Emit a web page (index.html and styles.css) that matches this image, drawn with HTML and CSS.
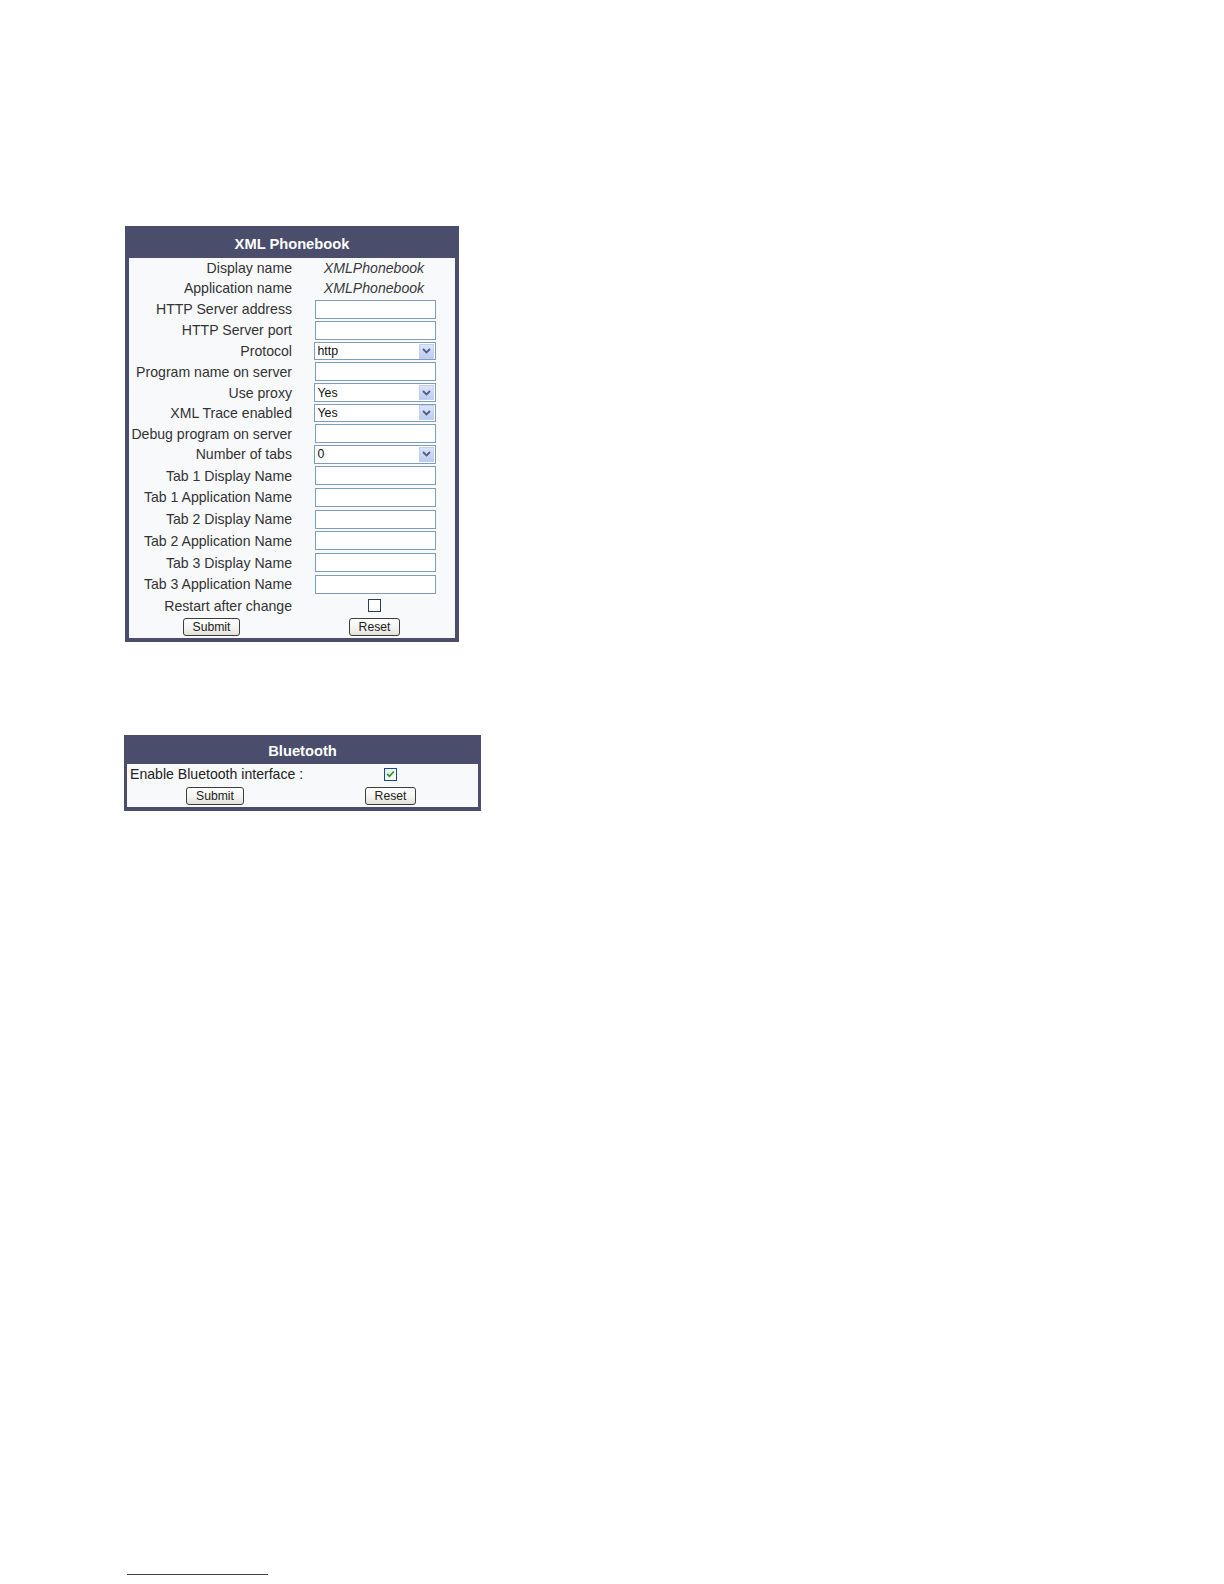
FILE: index.html
```html
<!DOCTYPE html>
<html>
<head>
<meta charset="utf-8">
<title>XML Phonebook</title>
<link rel="stylesheet" href="styles.css">
</head>
<body>
<div class="page">
  <section class="panel phonebook">
    <div class="panel-head">XML Phonebook</div>
    <div class="panel-body">
      <div class="row h20"><span class="label">Display name</span><span class="value">XMLPhonebook</span></div>
      <div class="row h20"><span class="label">Application name</span><span class="value">XMLPhonebook</span></div>
      <div class="row h21"><span class="label">HTTP Server address</span><span class="cell"><span class="field"></span></span></div>
      <div class="row h21"><span class="label">HTTP Server port</span><span class="cell"><span class="field"></span></span></div>
      <div class="row h20"><span class="label">Protocol</span><span class="cell"><span class="select"><span class="select-text">http</span><span class="select-btn"><svg width="9" height="6" viewBox="0 0 9 6"><path d="M1 1 L4.5 4.5 L8 1" fill="none" stroke="#4d6185" stroke-width="1.8"/></svg></span></span></span></div>
      <div class="row h21"><span class="label">Program name on server</span><span class="cell"><span class="field"></span></span></div>
      <div class="row h20"><span class="label">Use proxy</span><span class="cell"><span class="select"><span class="select-text">Yes</span><span class="select-btn"><svg width="9" height="6" viewBox="0 0 9 6"><path d="M1 1 L4.5 4.5 L8 1" fill="none" stroke="#4d6185" stroke-width="1.8"/></svg></span></span></span></div>
      <div class="row h20"><span class="label">XML Trace enabled</span><span class="cell"><span class="select"><span class="select-text">Yes</span><span class="select-btn"><svg width="9" height="6" viewBox="0 0 9 6"><path d="M1 1 L4.5 4.5 L8 1" fill="none" stroke="#4d6185" stroke-width="1.8"/></svg></span></span></span></div>
      <div class="row h21"><span class="label">Debug program on server</span><span class="cell"><span class="field"></span></span></div>
      <div class="row h20"><span class="label">Number of tabs</span><span class="cell"><span class="select"><span class="select-text">0</span><span class="select-btn"><svg width="9" height="6" viewBox="0 0 9 6"><path d="M1 1 L4.5 4.5 L8 1" fill="none" stroke="#4d6185" stroke-width="1.8"/></svg></span></span></span></div>
      <div class="row h22"><span class="label">Tab 1 Display Name</span><span class="cell"><span class="field"></span></span></div>
      <div class="row h21"><span class="label">Tab 1 Application Name</span><span class="cell"><span class="field"></span></span></div>
      <div class="row h22"><span class="label">Tab 2 Display Name</span><span class="cell"><span class="field"></span></span></div>
      <div class="row h21"><span class="label">Tab 2 Application Name</span><span class="cell"><span class="field"></span></span></div>
      <div class="row h22"><span class="label">Tab 3 Display Name</span><span class="cell"><span class="field"></span></span></div>
      <div class="row h21"><span class="label">Tab 3 Application Name</span><span class="cell"><span class="field"></span></span></div>
      <div class="row h21"><span class="label">Restart after change</span><span class="cell"><span class="check"></span></span></div>
      <div class="row h21"><span class="cell"><span class="btn">Submit</span></span><span class="cell"><span class="btn">Reset</span></span></div>
    </div>
  </section>

  <section class="panel bluetooth">
    <div class="panel-head">Bluetooth</div>
    <div class="panel-body">
      <div class="bt-row bt-first"><span class="bt-label">Enable Bluetooth interface :</span><span class="cell"><span class="check checked"><svg width="9" height="8" viewBox="0 0 9 8"><path d="M1.2 4 L3.5 6.3 L7.8 1.5" fill="none" stroke="#21a121" stroke-width="1.8"/></svg></span></span></div>
      <div class="bt-row bt-second"><span class="cell"><span class="btn">Submit</span></span><span class="cell"><span class="btn">Reset</span></span></div>
    </div>
  </section>

  <div class="footnote-rule"></div>
</div>
</body>
</html>
```

FILE: styles.css
```css
html, body {
  margin: 0;
  padding: 0;
  background: #ffffff;
}

.page {
  padding: 226px 0 0 125px;
  font-family: "Liberation Sans", Arial, sans-serif;
  color: #333333;
  height: 1358px;
  position: relative;
}

.panel {
  background: #f8f9fb;
  border: 4px solid #4a4e6c;
  border-top: 0;
  box-sizing: border-box;
}

.phonebook {
  width: 334px;
}

.panel-head {
  background: #4a4e6c;
  color: #ffffff;
  font-weight: bold;
  font-size: 14.7px;
  text-align: center;
}

.phonebook .panel-head {
  height: 32px;
  line-height: 36px;
  margin: 0 -4px;
}

.row {
  display: grid;
  grid-template-columns: 165px 161px;
  align-items: center;
}

.h20 { height: 20.25px; }
.h21 { height: 21.25px; }
.h22 { height: 22.25px; }

.label {
  text-align: right;
  font-size: 14.1px;
  padding-right: 2px;
  white-space: nowrap;
}

.value {
  text-align: center;
  font-size: 14.1px;
  font-style: italic;
  color: #3a3a3a;
  padding-right: 1px;
}

.cell {
  display: flex;
  justify-content: center;
  align-items: center;
}

.field {
  display: block;
  width: 121px;
  height: 19px;
  box-sizing: border-box;
  border: 1px solid #7f9db9;
  background: #ffffff;
  margin-left: 1px;
}

.select {
  display: flex;
  align-items: center;
  width: 122px;
  height: 18.5px;
  box-sizing: border-box;
  border: 1px solid #7f9db9;
  background: #ffffff;
}

.select-text {
  flex: 1;
  font-family: "Liberation Sans", Arial, sans-serif;
  font-size: 12.3px;
  color: #111111;
  padding-left: 3px;
  line-height: 16px;
}

.select-btn {
  width: 15px;
  height: 15px;
  margin-right: 1px;
  background: linear-gradient(#dbe4fa, #bccbef);
  border: 1px solid #c3d0ee;
  box-sizing: border-box;
  display: flex;
  align-items: center;
  justify-content: center;
}

.check {
  display: flex;
  align-items: center;
  justify-content: center;
  width: 12.5px;
  height: 12.5px;
  box-sizing: border-box;
  border: 1px solid #2a3f5c;
  background: #ffffff;
}

.check.checked {
  border-color: #1c4a80;
  background: linear-gradient(135deg, #e8e8e4, #ffffff);
}

.btn {
  display: inline-block;
  height: 18.3px;
  line-height: 17px;
  box-sizing: border-box;
  padding: 0 9px;
  border: 1px solid #3d3d3d;
  border-radius: 3px;
  background: linear-gradient(#ffffff, #f2f2ee 60%, #e2e1d8);
  font-size: 12.2px;
  color: #222222;
  font-family: "Liberation Sans", Arial, sans-serif;
}

.bluetooth {
  width: 357px;
  margin-left: -1px;
  margin-top: 93px;
  border-width: 0 3px 4px 3px;
}

.bluetooth .panel-head {
  height: 29.3px;
  line-height: 32px;
  margin: 0 -3px;
}

.bt-row {
  display: grid;
  grid-template-columns: 176px 175px;
  align-items: center;
}

.bt-first { height: 21px; }
.bt-second { height: 22px; }

.bt-label {
  font-size: 14.1px;
  padding-left: 3px;
  white-space: nowrap;
  color: #222222;
}

.footnote-rule {
  position: absolute;
  left: 127px;
  top: 1574px;
  width: 141px;
  height: 1px;
  background: #444444;
}
```
